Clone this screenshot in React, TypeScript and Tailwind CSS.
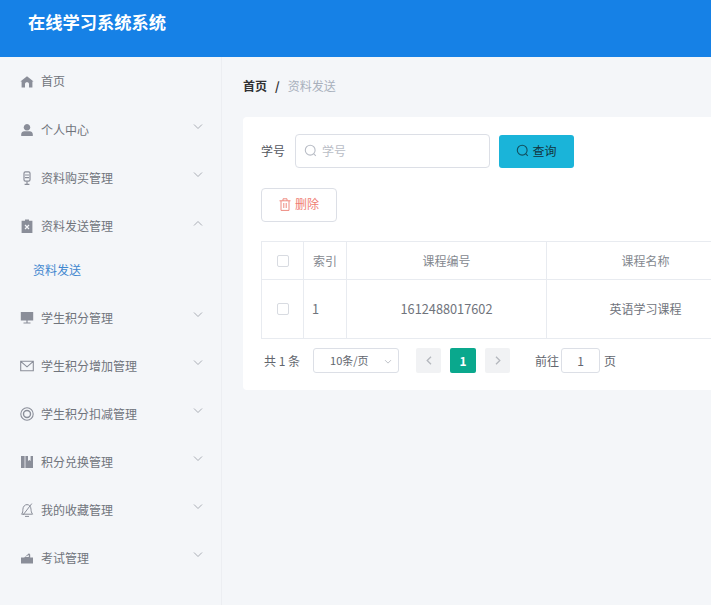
import React from "react";

const font = { fontFamily: '"Noto Sans CJK SC", "Liberation Sans", sans-serif' };

const Chevron = ({ up = false, className = "" }: { up?: boolean; className?: string }) => (
  <svg width="10" height="6" viewBox="0 0 10 6" fill="none" stroke="#a9adb5" strokeWidth="1" className={className}>
    <path d={up ? "M1 5.5 L5 1.5 L9 5.5" : "M1 .5 L5 4.5 L9 .5"} />
  </svg>
);

const Search = ({ color }: { color: string }) => (
  <svg width="13" height="13" viewBox="0 0 13 13" fill="none" stroke={color} strokeWidth="1.1">
    <circle cx="6.2" cy="6.2" r="4.9" />
    <path d="M9.8 9.8 L11.8 11.8" />
  </svg>
);

const c = "#8a8e99";
const icons: Record<string, React.ReactNode> = {
  home: <path fill={c} d="M7 2.2 L13.6 7.6 L12.4 7.6 L12.4 13.4 L9 13.4 L9 10.2 C9 8.8 8.2 8.2 7 8.2 C5.8 8.2 5 8.8 5 10.2 L5 13.4 L1.6 13.4 L1.6 7.6 L.4 7.6 Z" />,
  user: <path fill={c} d="M7 1 a3.3 3.3 0 1 1 -.01 0 Z M1.2 13 v-1.8 c0-2 1.6-3 3-3 h5.6 c1.4 0 3 1 3 3 V13 Z" />,
  mic: (
    <g fill="none" stroke={c} strokeWidth="1.2">
      <rect x="4" y="0.8" width="6" height="9.4" rx="1.4" />
      <path d="M5 4 h4 M5 6.6 h4" />
      <path d="M7 10.4 V13.2 M4.6 13.4 h4.8" />
    </g>
  ),
  clip: (
    <g>
      <path fill={c} d="M5 0.4 h4 v1.4 h3.4 V14 H1.6 V1.8 H5 Z" />
      <path stroke="#f4f6f9" strokeWidth="1.2" d="M5 6 L9 10 M9 6 L5 10" />
    </g>
  ),
  screen: <path fill={c} d="M.8 1 h12.4 v8.6 H.8 Z M3.5 11.6 h7 v1 h-7 Z M6.4 9.6 h1.2 v2 H6.4 Z" />,
  mail: <path fill="none" stroke={c} strokeWidth="1.1" d="M.7 2.2 h12.6 v9.6 H.7 Z M1 2.6 L7 7.8 L13 2.6" />,
  ring: (
    <g fill="none" stroke={c} strokeWidth="1.1">
      <circle cx="7" cy="7" r="6.2" />
      <circle cx="7" cy="7" r="3.5" strokeWidth="1.4" />
    </g>
  ),
  books: <path fill={c} fillRule="evenodd" d="M1 1 h3.6 V13 H1 Z M5.4 1 H13 V13 H5.4 Z M8 1 h2.6 V6 L9.3 5 L8 6 Z" />,
  bell: (
    <g fill="none" stroke={c} strokeWidth="1">
      <path d="M1.6 11.2 c1.2-1.4 1.2-3.2 1.3-5 C3 3.4 5 1.6 7 1.6 c2.2 0 3.8 1.9 4 4.6 C11.1 8 11.4 9.8 12.6 11.2 Z" />
      <path d="M11.8 .6 L3 12 M5 13.4 h4" />
    </g>
  ),
  exam: <path fill={c} fillRule="evenodd" d="M1 6.4 H4.2 L9 2.2 L10.2 3.4 V6.4 H13 V12.6 H1 Z M5 5.9 H8.8 V3.9 Z" />,
};

const Icon = ({ name }: { name: string }) => (
  <svg width="14" height="14" viewBox="0 0 14 14" className="shrink-0">
    {icons[name]}
  </svg>
);

const MenuRow = ({ icon, label, arrow = "down", first = false }: { icon: string; label: string; arrow?: "down" | "up" | "none"; first?: boolean }) => (
  <div className={`relative flex items-center pl-[20px] text-[12px] text-[#70747c] ${first ? "h-[49px] pb-[2px]" : "h-12"}`}>
    <Icon name={icon} />
    <span className="ml-[7px]">{label}</span>
    {arrow !== "none" && <Chevron up={arrow === "up"} className="absolute right-[18px] top-[18px]" />}
  </div>
);

const Checkbox = () => (
  <span className="block h-[12px] w-[12px] rounded-[2px] border border-[#d8dbe1] bg-white" />
);

const colsHead = "flex items-center justify-center border-r border-[#e8ebf0]";

export default function App() {
  return (
    <div className="flex h-[605px] w-[711px] flex-col overflow-hidden bg-[#f4f6f9]" style={font}>
      <header className="flex h-[57px] shrink-0 items-start bg-[#1681e6] pl-[28px] pt-[9px] text-[17.25px] leading-[26px] font-bold text-white">
        在线学习系统系统
      </header>
      <div className="flex min-h-0 flex-1">
        <aside className="w-[222px] shrink-0 border-r border-[#eceef2] bg-[#f4f6f9]">
          <MenuRow first icon="home" label="首页" arrow="none" />
          <MenuRow icon="user" label="个人中心" />
          <MenuRow icon="mic" label="资料购买管理" />
          <MenuRow icon="clip" label="资料发送管理" arrow="up" />
          <div className="h-[44px] pl-[33px] text-[12px] leading-[40px] text-[#3f86cf]">资料发送</div>
          <MenuRow icon="screen" label="学生积分管理" />
          <MenuRow icon="mail" label="学生积分增加管理" />
          <MenuRow icon="ring" label="学生积分扣减管理" />
          <MenuRow icon="books" label="积分兑换管理" />
          <MenuRow icon="bell" label="我的收藏管理" />
          <MenuRow icon="exam" label="考试管理" />
        </aside>
        <main className="min-w-0 flex-1 pl-[21px]">
          <div className="flex h-[60px] items-center pb-[2px] text-[12px]">
            <span className="font-bold text-[#303133]">首页</span>
            <span className="mx-[8px] font-bold text-[#303133]">/</span>
            <span className="text-[#a8b0bc]">资料发送</span>
          </div>
          <section className="h-[273px] w-[600px] rounded-l-[4px] bg-white pl-[18px] pt-[17px]">
            <div className="flex items-center">
              <span className="w-[34px] text-[12px] text-[#52565e]">学号</span>
              <div className="flex h-[34px] w-[195px] items-center rounded-[4px] border border-[#dcdfe6] pl-[8px] pb-[1px] text-[12px] text-[#b9bdc6]">
                <Search color="#b9bdc6" />
                <span className="ml-[5px]">学号</span>
              </div>
              <div className="ml-[9px] flex h-[33px] w-[75px] items-center justify-center rounded-[3px] bg-[#1ab4d9] pb-[1px] text-[12px] text-[#12343f]">
                <Search color="#12505f" />
                <span className="ml-[3px]">查询</span>
              </div>
            </div>
            <div className="mt-[20px] flex h-[34px] w-[76px] items-center justify-center rounded-[4px] border border-[#dcdfe6] pb-[2px] text-[12px] text-[#f07c72]">
              <svg width="12" height="13" viewBox="0 0 12 13" fill="none" stroke="#ee8a80" strokeWidth="1">
                <path d="M.5 2.8 h11 M4 2.8 V.8 h4 v2 M2 2.8 V12.4 h8 V2.8 M4.8 5 v5 M7.2 5 v5" />
              </svg>
              <span className="ml-[4px]">删除</span>
            </div>
            <div className="mt-[19px] w-[520px] border-t border-l border-[#e8ebf0] text-[12px] text-[#70747c]">
              <div className="flex h-[38px] border-b border-[#e8ebf0] text-[#84888f]">
                <div className={`${colsHead} w-[42px]`}><Checkbox /></div>
                <div className={`${colsHead} w-[43px]`}>索引</div>
                <div className={`${colsHead} w-[200px]`}>课程编号</div>
                <div className={`${colsHead} w-[198px]`}>课程名称</div>
              </div>
              <div className="flex h-[59px] border-b border-[#e8ebf0]">
                <div className={`${colsHead} w-[42px] pb-[1px]`}><Checkbox /></div>
                <div className={`${colsHead} w-[43px] !justify-start pl-[8px] pb-[1px] text-[12.75px]`}>1</div>
                <div className={`${colsHead} w-[200px] pb-[1px] text-[12.75px]`}>1612488017602</div>
                <div className={`${colsHead} w-[198px] pb-[1px]`}>英语学习课程</div>
              </div>
            </div>
            <div className="mt-[9px] flex h-[25px] items-center text-[12px] text-[#62666e]">
              <span className="ml-[3px]">共 1 条</span>
              <div className="relative ml-[13px] flex h-[25px] w-[86px] items-center rounded-[3px] border border-[#dcdfe6] pl-[16px] text-[11px]">
                10条/页
                <Chevron className="absolute right-[5px] top-[10px] scale-75" />
              </div>
              <div className="ml-[17px] flex h-[25px] w-[25px] items-center justify-center rounded-[2px] bg-[#f1f2f4]">
                <svg width="6" height="9" viewBox="0 0 6 9" fill="none" stroke="#b4b7bd" strokeWidth="1.3"><path d="M5 .8 L1.2 4.5 L5 8.2" /></svg>
              </div>
              <div className="ml-[9px] flex h-[25px] w-[26px] items-center justify-center rounded-[2px] bg-[#0aa88d] font-bold text-white">1</div>
              <div className="ml-[9px] flex h-[25px] w-[25px] items-center justify-center rounded-[2px] bg-[#f1f2f4]">
                <svg width="6" height="9" viewBox="0 0 6 9" fill="none" stroke="#b4b7bd" strokeWidth="1.3"><path d="M1 .8 L4.8 4.5 L1 8.2" /></svg>
              </div>
              <span className="ml-[25px]">前往</span>
              <div className="ml-[2px] flex h-[25px] w-[39px] items-center justify-center rounded-[3px] border border-[#dcdfe6]">1</div>
              <span className="ml-[4px]">页</span>
            </div>
          </section>
        </main>
      </div>
    </div>
  );
}
